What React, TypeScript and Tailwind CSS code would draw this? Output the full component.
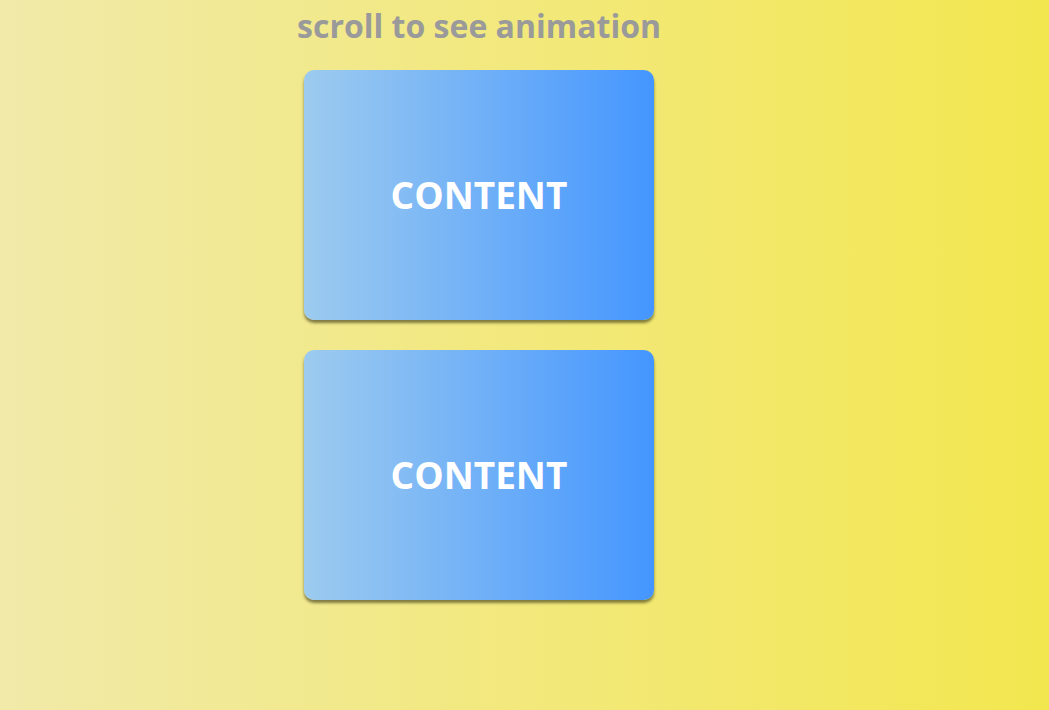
const Card = () => (
  <div className="flex h-[250px] w-[350px] items-center justify-center rounded-[10px] bg-[linear-gradient(to_right,#9dcbef,#4496ff)] shadow-[0_3px_3px_rgba(90,85,40,0.75)]">
    <span className="text-[37px] font-bold text-white">CONTENT</span>
  </div>
);

export default function App() {
  return (
    <div className="min-h-[710px] w-full bg-[linear-gradient(to_right,#f1eaa9,#f3e74f)] font-['Open_Sans',sans-serif]">
      <div className="flex flex-col items-center pr-[91px]">
        <h1 className="mt-[6px] text-[32px] leading-[40px] font-bold text-[#9a9a9a]">
          scroll to see animation
        </h1>
        <div className="mt-[24px] flex flex-col gap-[30px]">
          <Card />
          <Card />
        </div>
      </div>
    </div>
  );
}
